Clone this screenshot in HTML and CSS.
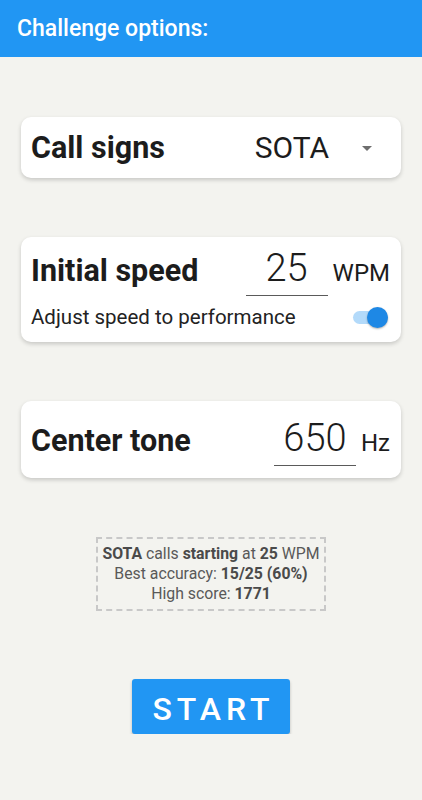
FILE: index.html
```html
<!DOCTYPE html>
<html lang="en">
<head>
    <meta charset="UTF-8">
    <meta name="viewport" content="width=device-width, initial-scale=1.0">
    <title>Challenge options</title>
    <link rel="stylesheet" href="styles.css">
</head>
<body>

    <div class="app-bar">Challenge options:</div>

    <div class="content">
        <div class="card card-calls">
            <span class="card-title">Call signs</span>
            <div class="select">
                <span class="select-value">SOTA</span>
                <span class="select-arrow"></span>
            </div>
        </div>

        <div class="card card-speed">
            <div class="row row-speed">
                <span class="card-title">Initial speed</span>
                <div class="field">
                    <span class="field-value speed-value">25</span>
                    <span class="field-unit">WPM</span>
                </div>
            </div>
            <div class="row row-adjust">
                <span class="adjust-label">Adjust speed to performance</span>
                <span class="switch"><span class="switch-thumb"></span></span>
            </div>
        </div>

        <div class="card card-tone">
            <span class="card-title">Center tone</span>
            <div class="field">
                <span class="field-value tone-value">650</span>
                <span class="field-unit unit-hz">Hz</span>
            </div>
        </div>

        <div class="summary">
            <div><b>SOTA</b> calls <b>starting</b> at <b>25</b> WPM</div>
            <div>Best accuracy: <b>15/25 (60%)</b></div>
            <div>High score: <b>1771</b></div>
        </div>

        <button class="start-btn">START</button>
    </div>

</body>
</html>
```

FILE: styles.css
```css
body {
    margin: 0;
    background-color: #f3f3ef;
    font-family: Roboto, "Noto Sans", sans-serif;
    color: #1a1a1a;
}
.app-bar {
    height: 57px;
    background-color: #2196f3;
    color: #fff;
    font-size: 23px;
    font-weight: 500;
    padding-left: 17px;
    display: flex;
    align-items: center;
    box-sizing: border-box;
    padding-bottom: 1px;
}
.content {
    padding: 60px 21px 0 21px;
    display: flex;
    flex-direction: column;
    align-items: center;
}
.card {
    width: 100%;
    box-sizing: border-box;
    background: #fff;
    border-radius: 10px;
    box-shadow: 0 2px 4px rgba(0, 0, 0, 0.18);
    padding: 0 11px 0 10px;
    margin-bottom: 59px;
}
.card-title {
    font-size: 30.5px;
    font-weight: bold;
    color: #1c1c1c;
}
.card-calls {
    height: 61px;
    display: flex;
    align-items: center;
    justify-content: space-between;
}
.select {
    display: flex;
    align-items: center;
}
.select-value {
    font-size: 30px;
    color: #1c1c1c;
}
.select-arrow {
    width: 0;
    height: 0;
    border-left: 5px solid transparent;
    border-right: 5px solid transparent;
    border-top: 5px solid #6e6e6e;
    margin: 2px 18px 0 33px;
}
.card-speed {
    height: 105px;
    padding-top: 7px;
}
.row {
    display: flex;
    align-items: center;
    justify-content: space-between;
}
.row-speed {
    align-items: baseline;
}
.field {
    display: flex;
    align-items: baseline;
}
.field-value {
    font-size: 38px;
    font-weight: 300;
    color: #1c1c1c;
    border-bottom: 1px solid #5a5a5a;
    text-align: center;
    line-height: 48px;
    padding-bottom: 3px;
}
.speed-value {
    width: 82px;
}
.tone-value {
    width: 82px;
}
.field-unit {
    font-size: 24px;
    margin-left: 5px;
    color: #1c1c1c;
}
.unit-hz {
    margin-left: 5px;
}
.row-adjust {
    margin-top: 9px;
}
.adjust-label {
    font-size: 20.5px;
    color: #222;
}
.switch {
    position: relative;
    width: 35px;
    height: 13px;
    border-radius: 7px;
    background-color: #b3dafa;
    margin-right: 2px;
}
.switch-thumb {
    position: absolute;
    right: 0;
    top: -4px;
    width: 21px;
    height: 21px;
    border-radius: 50%;
    background-color: #1e88e5;
    box-shadow: 0 1px 2px rgba(0, 0, 0, 0.3);
}
.card-tone {
    height: 77px;
    padding-top: 13px;
    display: flex;
    align-items: baseline;
    justify-content: space-between;
}
.summary {
    border: 2px dashed #c8c8c8;
    padding: 5px 0;
    text-align: center;
    font-size: 15.8px;
    line-height: 20px;
    color: #595959;
    width: 230px;
    box-sizing: border-box;
}
.summary b {
    color: #4a4a4a;
}
.start-btn {
    margin-top: 68px;
    width: 158px;
    height: 55px;
    border: none;
    border-radius: 3px;
    background-color: #2196f3;
    color: #fff;
    font-family: Roboto, "Noto Sans", sans-serif;
    font-size: 32px;
    font-weight: 500;
    letter-spacing: 5px;
    padding: 4px 0 0 5px;
    box-shadow: 0 2px 3px rgba(0, 0, 0, 0.25);
}
```
